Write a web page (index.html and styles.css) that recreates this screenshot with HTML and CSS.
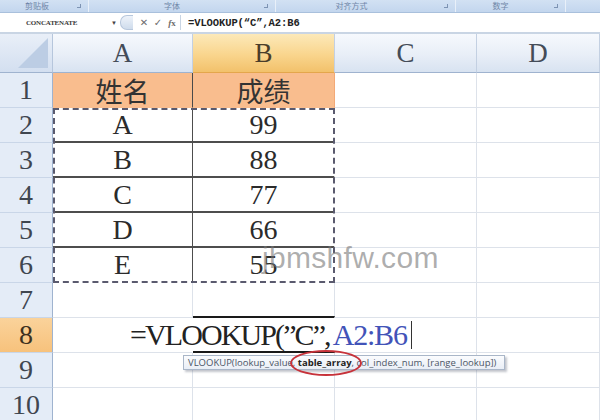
FILE: index.html
```html
<!DOCTYPE html>
<html lang="zh-CN">
<head>
    <meta charset="UTF-8">
    <title>VLOOKUP</title>
    <link rel="stylesheet" href="styles.css">
</head>
<body>
    <div class="window">
        <!-- ribbon group captions -->
        <div class="ribbon">
            <div class="group g-clip">剪贴板<span class="launcher"></span></div>
            <div class="group g-font">字体<span class="launcher"></span></div>
            <div class="group g-align">对齐方式<span class="launcher"></span></div>
            <div class="group g-num">数字<span class="launcher"></span></div>
            <div class="group g-rest"></div>
        </div>

        <!-- name box + formula bar -->
        <div class="formula-bar">
            <div class="name-box">CONCATENATE</div>
            <div class="drop">&#9660;</div>
            <div class="fx-buttons">
                <span class="bubble"></span>
                <span class="btn">&#10005;</span>
                <span class="btn">&#10003;</span>
                <span class="btn fx"><i>f</i>x</span>
            </div>
            <div class="formula">=VLOOKUP(&#8220;C&#8221;,A2:B6</div>
        </div>

        <div class="sheet">
            <div class="corner"><span class="tri"></span></div>
            <div class="col-head">A</div>
            <div class="col-head active">B</div>
            <div class="col-head">C</div>
            <div class="col-head">D</div>

            <div class="row-head">1</div>
            <div class="cell title t-left">姓名</div>
            <div class="cell title t-right">成绩</div>
            <div class="cell"></div>
            <div class="cell"></div>

            <div class="row-head">2</div>
            <div class="cell data d-left">A</div>
            <div class="cell data d-right">99</div>
            <div class="cell"></div>
            <div class="cell"></div>

            <div class="row-head">3</div>
            <div class="cell data d-left">B</div>
            <div class="cell data d-right">88</div>
            <div class="cell"></div>
            <div class="cell"></div>

            <div class="row-head">4</div>
            <div class="cell data d-left">C</div>
            <div class="cell data d-right">77</div>
            <div class="cell"></div>
            <div class="cell"></div>

            <div class="row-head">5</div>
            <div class="cell data d-left">D</div>
            <div class="cell data d-right">66</div>
            <div class="cell"></div>
            <div class="cell"></div>

            <div class="row-head">6</div>
            <div class="cell data d-left last">E</div>
            <div class="cell data d-right last">55</div>
            <div class="cell"></div>
            <div class="cell"></div>

            <div class="row-head">7</div>
            <div class="cell"></div>
            <div class="cell"></div>
            <div class="cell"></div>
            <div class="cell"></div>

            <div class="row-head active">8</div>
            <div class="cell edit-host">
                <span class="editing">=VLOOKUP(&#8221;C&#8221;,<span class="ref">A2:B6</span><span class="caret"></span></span>
            </div>
            <div class="cell edge"></div>
            <div class="cell"></div>
            <div class="cell"></div>

            <div class="row-head">9</div>
            <div class="cell"></div>
            <div class="cell"></div>
            <div class="cell"></div>
            <div class="cell"></div>

            <div class="row-head">10</div>
            <div class="cell"></div>
            <div class="cell"></div>
            <div class="cell"></div>
            <div class="cell"></div>

            <!-- copy range marquee around A2:B6 -->
            <div class="marquee"></div>

            <!-- argument hint under the edited cell -->
            <div class="hint">VLOOKUP(lookup_value, <b>table_array</b>, col_index_num, [range_lookup])</div>
            <div class="ring"></div>
            <div class="watermark">jbmshfw.com</div>
        </div>
    </div>
</body>
</html>
```

FILE: styles.css
```css
body {
    margin: 0;
    background: #ffffff;
    overflow: hidden;
}

.window {
    width: 600px;
    height: 420px;
    overflow: hidden;
}

/* ---------- ribbon captions ---------- */
.ribbon {
    display: flex;
    height: 12px;
    background: linear-gradient(#d2e1f3, #c3d6ee);
    border-bottom: 1px solid #a9c0dc;
    font-family: "Noto Sans CJK SC", sans-serif;
    font-size: 8px;
    line-height: 11px;
    color: #6f86a8;
}

.group {
    position: relative;
    text-align: center;
    padding-right: 20px;
    border-right: 1px solid #e9f0f9;
    box-sizing: border-box;
}

.g-clip { width: 89px; padding-right: 14px; }
.g-font { width: 187px; }
.g-align { width: 180px; padding-right: 28px; }
.g-num { width: 110px; }
.g-rest { flex: 1; border-right: none; }

.launcher {
    position: absolute;
    right: 7px;
    top: 4px;
    width: 3px;
    height: 3px;
    border-right: 1px solid #7d93b3;
    border-bottom: 1px solid #7d93b3;
}

/* ---------- formula bar ---------- */
.formula-bar {
    display: flex;
    align-items: center;
    height: 19px;
    background: #ffffff;
    border-bottom: 2px solid #c9d5e4;
    font-size: 9px;
}

.name-box {
    width: 108px;
    padding-left: 26px;
    box-sizing: border-box;
    font-family: "Liberation Serif", serif;
    font-weight: bold;
    font-size: 7px;
    color: #3a3a3a;
    letter-spacing: -0.2px;
}

.drop {
    width: 12px;
    font-size: 6px;
    color: #444;
    text-align: center;
}

.fx-buttons {
    display: flex;
    align-items: center;
    height: 15px;
    width: 60px;
    border-right: 1px solid #c9d5e4;
    color: #6d6d6d;
}

.bubble {
    width: 12px;
    height: 13px;
    border-radius: 7px 0 0 7px;
    background: linear-gradient(#eef3fa, #cfdcec);
    border: 1px solid #b7c7dc;
    border-right: none;
    margin-right: 4px;
}

.btn {
    width: 14px;
    text-align: center;
    font-family: "DejaVu Sans", sans-serif;
    font-size: 10px;
    font-weight: bold;
}

.btn.fx {
    font-family: "Liberation Serif", serif;
    font-size: 9px;
}

.formula {
    padding-left: 7px;
    font-family: "Liberation Mono", monospace;
    font-weight: bold;
    font-size: 10.5px;
    color: #222;
    letter-spacing: -0.1px;
}

/* ---------- sheet grid ---------- */
.sheet {
    position: relative;
    display: grid;
    grid-template-columns: 53px 140px 142px 142px 123px;
    grid-template-rows: 39px repeat(10, 35px);
    font-family: "Liberation Serif", serif;
    color: #3c3c3c;
}

.corner {
    position: relative;
    background: linear-gradient(#e9eff8, #d3dff0);
    border-right: 1px solid #b6c6dc;
    border-bottom: 1px solid #9fb3cf;
}

.tri {
    position: absolute;
    right: 4px;
    bottom: 4px;
    border-left: 30px solid transparent;
    border-bottom: 30px solid #bccde4;
}

.col-head {
    display: flex;
    align-items: center;
    justify-content: center;
    background: linear-gradient(#f6f9fd, #e8eef7 55%, #d8e3f1);
    border-right: 1px solid #c3d0e2;
    border-bottom: 1px solid #9fb3cf;
    font-size: 27px;
    color: #444c58;
}

.col-head.active {
    background: linear-gradient(#fce9b9, #f9d58d 55%, #f2c16b);
    border-bottom-color: #e4a64c;
    color: #4a3d2a;
}

.row-head {
    display: flex;
    align-items: center;
    justify-content: center;
    background: #e4ecf7;
    border-right: 1px solid #9fb3cf;
    border-bottom: 1px solid #c9d6e8;
    font-size: 28px;
    color: #3f4650;
}

.row-head.active {
    background: linear-gradient(#fad39b, #f7c27c);
    color: #3d3120;
}

.cell {
    display: flex;
    align-items: center;
    justify-content: center;
    border-right: 1px solid #dde2ea;
    border-bottom: 1px solid #dde2ea;
    font-size: 28px;
    color: #2b2b2b;
}

.title {
    background: #f9bd8e;
    font-family: "Noto Sans CJK SC", sans-serif;
    font-size: 27px;
    color: #333;
    border-bottom-color: #f9bd8e;
}

.t-left { border-right: 1px solid #4a4a4a; }
.t-right { border-right-color: #f3a977; }

.data {
    border-bottom: 2px solid #4d4d4d;
    border-right: 1px solid #4d4d4d;
}

.d-right { border-right-color: transparent; }
.data.last { border-bottom-color: transparent; }

/* heavier rules above and below B8 */
.edge {
    border-top: 2px solid #1a1a1a;
    border-bottom: 2px solid #1a1a1a;
    border-right-color: transparent;
    margin-top: -2px;
}

/* cell being edited: its text spills over the cells to the right */
.edit-host {
    justify-content: flex-start;
    overflow: visible;
    border-right-color: transparent;
    position: relative;
    z-index: 1;
}

.editing {
    margin-left: 77px;
    display: flex;
    align-items: center;
    white-space: nowrap;
    font-size: 30px;
    color: #222;
    letter-spacing: -1.9px;
}

.ref {
    color: #4253b8;
    padding-left: 3px;
    letter-spacing: -1.2px;
}

.caret {
    display: inline-block;
    width: 1px;
    height: 28px;
    margin-left: 4px;
    background: #333;
}

.marquee {
    position: absolute;
    left: 53px;
    top: 74px;
    width: 282px;
    height: 175px;
    box-sizing: border-box;
    border: 2px dashed #5a5a6e;
}

.hint {
    position: absolute;
    left: 183px;
    top: 321px;
    width: 322px;
    height: 15px;
    box-sizing: border-box;
    padding-left: 4px;
    background: linear-gradient(#fbfcfe, #e9eef6);
    border: 1px solid #a9b6c8;
    box-shadow: 2px 2px 2px rgba(80, 90, 110, 0.35);
    font-family: "Open Sans", sans-serif;
    font-size: 9.5px;
    line-height: 13px;
    color: #4b5566;
    white-space: nowrap;
    overflow: hidden;
    z-index: 2;
}

.hint b {
    color: #222;
}

.ring {
    position: absolute;
    left: 290px;
    top: 316px;
    width: 72px;
    height: 26px;
    box-sizing: border-box;
    border: 2px solid #c7323a;
    border-radius: 50%;
    z-index: 3;
}

.watermark {
    position: absolute;
    left: 262px;
    top: 207px;
    font-family: "Liberation Sans", sans-serif;
    font-size: 30px;
    color: rgba(120, 120, 120, 0.6);
    letter-spacing: 0.3px;
}
```
